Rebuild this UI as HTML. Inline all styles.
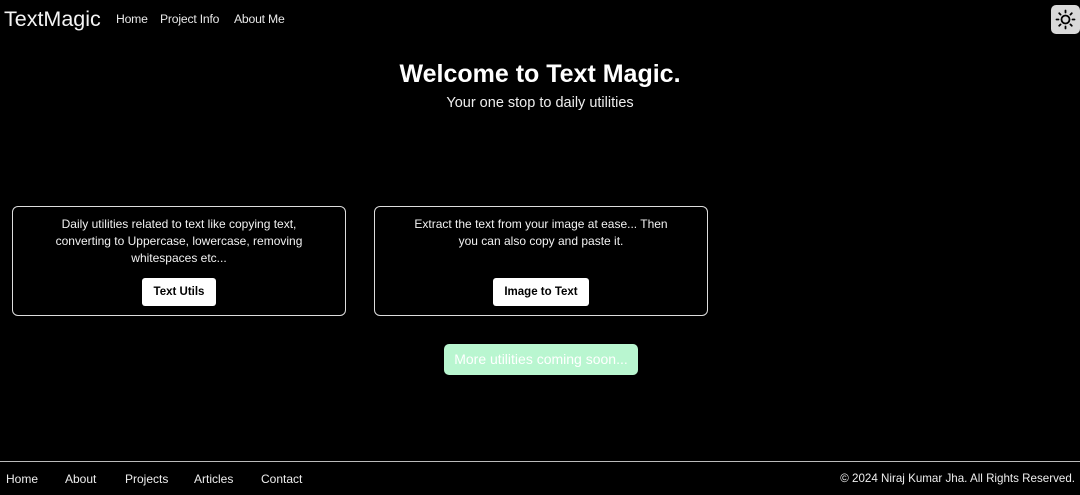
<!DOCTYPE html>
<html><head><meta charset="utf-8"><style>
*{margin:0;padding:0;box-sizing:border-box}
body{width:1080px;height:495px;background:#000;color:#fff;font-family:"Liberation Sans","DejaVu Sans",sans-serif;position:relative;overflow:hidden}
.abs{position:absolute;white-space:nowrap}
.brand{left:4px;top:7px;font-size:21.5px;color:#f4f4f4}
.nav{top:12px;font-size:12.2px;color:#e8e8e8;letter-spacing:-0.2px}
.toggle{left:1051px;top:5px;width:29px;height:29px;background:#d9d9d9;border-radius:5px}
h1{position:absolute;left:0;width:1080px;text-align:center;top:60px;font-size:25px;font-weight:bold}
.sub{left:0;width:1080px;text-align:center;top:95px;font-size:14.5px;color:#eee}
.card{position:absolute;top:206px;width:334px;height:110px;border:1.5px solid #ddd;border-radius:6px;text-align:center}
.card p{font-size:12px;line-height:17px;margin:9px auto 0;color:#f2f2f2}
.btn{position:absolute;top:71px;height:28px;background:#fff;color:#000;border-radius:3px;font-size:11.5px;font-weight:bold;line-height:28px;text-align:center}
.green{left:444px;top:344px;width:194px;height:31px;background:#b9f6d0;border-radius:5px;color:#fff;font-size:14px;line-height:31px;text-align:center}
.line{position:absolute;left:0;top:461px;width:1080px;height:1px;background:#bbb}
.f{top:472px;font-size:12px;color:#eee}
</style></head><body>
<div class="abs brand">TextMagic</div>
<div class="abs nav" style="left:116px">Home</div>
<div class="abs nav" style="left:160px">Project Info</div>
<div class="abs nav" style="left:234px">About Me</div>
<div class="abs toggle"><svg width="29" height="29" viewBox="0 0 29 29"><circle cx="14.5" cy="14.5" r="4" fill="none" stroke="#000" stroke-width="1.8"/><g stroke="#000" stroke-width="1.8" stroke-linecap="round"><line x1="14.5" y1="5.5" x2="14.5" y2="7.5"/><line x1="14.5" y1="21.5" x2="14.5" y2="23.5"/><line x1="5.5" y1="14.5" x2="7.5" y2="14.5"/><line x1="21.5" y1="14.5" x2="23.5" y2="14.5"/><line x1="8.2" y1="8.2" x2="9.6" y2="9.6"/><line x1="19.4" y1="19.4" x2="20.8" y2="20.8"/><line x1="8.2" y1="20.8" x2="9.6" y2="19.4"/><line x1="19.4" y1="9.6" x2="20.8" y2="8.2"/></g></svg></div>
<h1>Welcome to Text Magic.</h1>
<div class="abs sub">Your one stop to daily utilities</div>
<div class="card" style="left:12px"><p style="width:260px">Daily utilities related to text like copying text, converting to Uppercase, lowercase, removing whitespaces etc...</p><div class="btn" style="left:129px;width:74px">Text Utils</div></div>
<div class="card" style="left:374px"><p style="width:260px">Extract the text from your image at ease... Then you can also copy and paste it.</p><div class="btn" style="left:118px;width:96px">Image to Text</div></div>
<div class="abs green">More utilities coming soon...</div>
<div class="line"></div>
<div class="abs f" style="left:6px">Home</div>
<div class="abs f" style="left:65px">About</div>
<div class="abs f" style="left:125px">Projects</div>
<div class="abs f" style="left:194px">Articles</div>
<div class="abs f" style="left:261px">Contact</div>
<div class="abs f" style="right:5px;font-size:11.6px">© 2024 Niraj Kumar Jha. All Rights Reserved.</div>
</body></html>
